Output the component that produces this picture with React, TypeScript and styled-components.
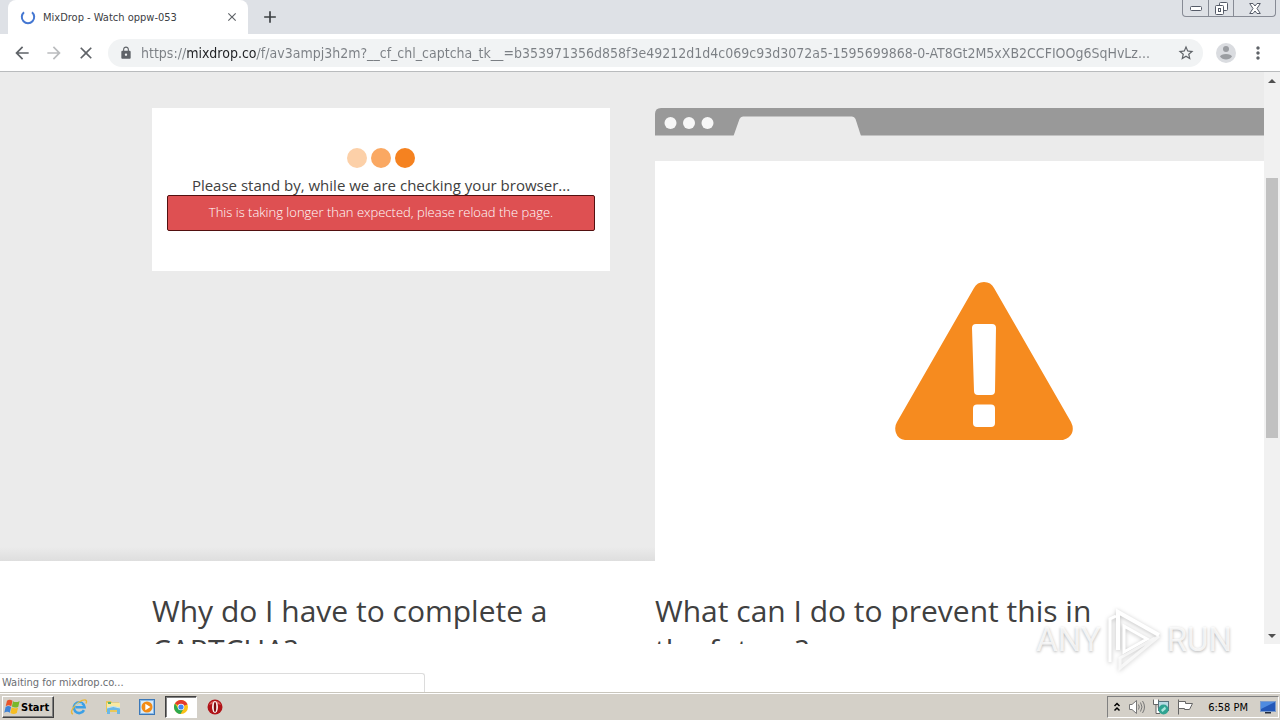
import React from "react";
import styled, { createGlobalStyle } from "styled-components";
import {
  MdArrowBack,
  MdArrowForward,
  MdClose,
  MdLock,
  MdStarBorder,
  MdMoreVert,
  MdAdd,
} from "react-icons/md";

const UI_FONT = '"DejaVu Sans Condensed", "DejaVu Sans", sans-serif';
const PAGE_FONT = '"Open Sans", sans-serif';

const GlobalStyle = createGlobalStyle`
  * { box-sizing: border-box; }
  body { margin: 0; background: #fff; font-family: ${UI_FONT}; }
  button { font: inherit; color: inherit; border: 0; padding: 0; background: none; }
  h2, p { margin: 0; }
`;

const Desktop = styled.div`
  display: flex;
  flex-direction: column;
  height: 100vh;
  overflow: hidden;
`;

/* Browser chrome */

const TabStrip = styled.header`
  display: flex;
  flex: none;
  height: 34px;
  padding-left: 8px;
  background: #dee1e6;
`;

const Tab = styled.div`
  display: flex;
  align-items: center;
  width: 240px;
  padding: 0 8px 0 12px;
  gap: 7px;
  background: #fff;
  border-radius: 8px 8px 0 0;
  color: #3c4043;
`;

const TabTitle = styled.span`
  flex: 1;
  font-size: 11px;
  white-space: nowrap;
`;

const IconButton = styled.button<{ $size?: number; $color?: string }>`
  display: grid;
  place-items: center;
  flex: none;
  width: ${(p) => p.$size ?? 32}px;
  height: ${(p) => p.$size ?? 32}px;
  color: ${(p) => p.$color ?? "#5f6368"};
`;

const NewTab = styled(IconButton)`
  align-self: center;
  margin-left: 6px;
`;

const WindowControls = styled.div`
  display: flex;
  height: 17px;
  margin: 0 4px 0 auto;
  border: 1px solid #878b95;
  border-top: 0;
  border-radius: 0 0 4px 4px;
`;

const WindowButton = styled.button<{ $wide?: boolean }>`
  display: grid;
  place-items: center;
  width: ${(p) => (p.$wide ? 42 : 25)}px;
  height: 16px;
  & + & { border-left: 1px solid #878b95; }
`;

const Toolbar = styled.div`
  display: flex;
  align-items: center;
  flex: none;
  height: 38px;
  padding: 0 6px;
  background: #fff;
  border-bottom: 1px solid #b9bbbd;
`;

const Omnibox = styled.div`
  display: flex;
  align-items: center;
  flex: 1;
  min-width: 0;
  height: 28px;
  margin: 0 7px 0 6px;
  padding: 0 1px 0 11px;
  gap: 8px;
  border-radius: 14px;
  background: #f1f3f4;
  color: #5f6368;
`;

const Address = styled.input`
  flex: 1;
  min-width: 0;
  height: 24px;
  border: 0;
  padding: 0;
  outline: 0;
  font-family: ${UI_FONT};
  font-size: 14px;
  color: transparent;
  background: linear-gradient(90deg, #7b7f84 46px, #202124 46px, #202124 116px, #7b7f84 116px);
  background-clip: text;
  -webkit-background-clip: text;
`;

/* Page */

const Viewport = styled.div`
  display: flex;
  flex: 1;
  min-height: 0;
  overflow: hidden;
`;

const Page = styled.main`
  flex: 1;
  min-width: 0;
  overflow: hidden;
  font-family: ${PAGE_FONT};
  color: #404040;
`;

const Columns = styled.section`
  display: grid;
  grid-template-columns: 458px minmax(0, 1fr);
  column-gap: 45px;
  padding-left: calc((100% - 960px) / 2);
`;

const Hero = styled(Columns)`
  padding-top: 36px;
  background: linear-gradient(#ebebeb, #ebebeb calc(100% - 14px), #dedede);
`;

const CheckCard = styled.div`
  align-self: start;
  padding: 40px 15px;
  background: #fff;
  text-align: center;
`;

const Dots = styled.div`
  display: flex;
  justify-content: center;
  gap: 4px;
`;

const Dot = styled.span<{ $color: string }>`
  width: 20px;
  height: 20px;
  border-radius: 50%;
  background: ${(p) => p.$color};
`;

const StandBy = styled.p`
  padding-top: 7px;
  font-size: 15px;
  line-height: 20px;
`;

const ErrorBox = styled.p`
  padding-bottom: 2px;
  border: 1px solid #521010;
  border-radius: 2px;
  background: #de5052;
  color: #fff;
  font-size: 13px;
  font-weight: 300;
  line-height: 32px;
`;

const MockClip = styled.div`
  overflow: hidden;
`;

const MockWindow = styled.div`
  width: 658px;
`;

const MockBar = styled.svg`
  display: block;
`;

const MockBody = styled.div`
  display: grid;
  place-items: center;
  height: 400px;
  margin-top: 25px;
  background: #fff;
`;

const Questions = styled(Columns)`
  padding-top: 30px;
  background: #fff;
`;

const Question = styled.h2`
  max-width: 458px;
  font-size: 30px;
  font-weight: 400;
  line-height: 39px;
`;

const Scrollbar = styled.div`
  display: flex;
  flex-direction: column;
  align-items: center;
  flex: none;
  width: 16px;
  background: #f1f1f1;
`;

const ScrollTrack = styled.div`
  flex: 1;
  padding-top: 89px;
`;

const ScrollThumb = styled.div`
  width: 12px;
  height: 260px;
  background: #c1c1c1;
`;

/* Bottom of the screen */

const StatusArea = styled.div`
  display: flex;
  align-items: flex-end;
  flex: none;
  height: 48px;
`;

const Status = styled.div`
  width: 425px;
  height: 19px;
  padding-left: 2px;
  border: 1px solid #dcdcdc;
  border-width: 1px 1px 0 0;
  border-radius: 0 3px 0 0;
  color: #6b6e72;
  font-size: 11px;
  line-height: 18px;
`;

const Taskbar = styled.footer`
  display: flex;
  align-items: center;
  flex: none;
  height: 28px;
  padding: 1px 1px 0 2px;
  border-top: 1px solid #c9c6bd;
  background: #d4d0c8;
  box-shadow: inset 0 1px #fff;
  color: #000;
  font-size: 11px;
`;

const StartButton = styled.button`
  display: flex;
  align-items: center;
  gap: 1px;
  width: 52px;
  height: 22px;
  padding-left: 1px;
  border: 1px solid;
  border-color: #fff #404040 #404040 #fff;
  box-shadow: inset -1px -1px #808080;
  font-weight: 700;
`;

const QuickLaunch = styled.nav`
  display: flex;
  margin-left: 9px;
  gap: 2px;
`;

const QuickButton = styled.button<{ $active?: boolean }>`
  display: grid;
  place-items: center;
  width: 32px;
  height: 22px;
  border: 1px solid transparent;
  ${(p) =>
    p.$active &&
    `background: #fff; border-color: #404040 #fff #fff #404040; box-shadow: inset 1px 1px #808080;`}
`;

const Tray = styled.div`
  display: flex;
  align-items: center;
  height: 22px;
  margin-left: auto;
  padding: 0 2px 0 5px;
  gap: 7px;
  border: 1px solid;
  border-color: #808080 #fff #fff #808080;
`;

const Clock = styled.time`
  padding: 0 5px 0 7px;
  white-space: nowrap;
`;

const Watermark = styled.div`
  position: absolute;
  right: 48px;
  bottom: 48px;
  display: flex;
  align-items: center;
  gap: 4px;
  color: rgba(255, 255, 255, 0.8);
  font-family: Roboto, sans-serif;
  font-size: 33px;
  line-height: 36px;
  text-shadow: 0 1px 3px rgba(0, 0, 0, 0.3);
  pointer-events: none;
`;

const MarkLogo = styled.svg`
  filter: drop-shadow(0 1px 2px rgba(0, 0, 0, 0.25));
`;

const Spinner = () => (
  <svg width="16" height="16" viewBox="0 0 16 16" fill="none" aria-hidden="true">
    <path d="M4 3.2A6.2 6.2 0 1 0 12 3.2" stroke="#4477d2" strokeWidth="2" />
  </svg>
);

const WarningSign = () => (
  <svg width="178" height="158" viewBox="0 0 178 158" role="img" aria-label="Warning">
    <path
      d="M79 6Q82 0 89 0T99 6L176 140Q179 146 177 151T168 158H10Q3 157 1 151T2 140Z"
      fill="#f68b1f"
    />
    <path
      d="M81 42H97Q101 42 101 46L100 109Q100 113 96 113H83Q79 113 79 109L77 46Q77 42 81 42Z"
      fill="#fff"
    />
    <rect x="78" y="122.500" width="22" height="22.500" rx="4" fill="#fff" />
  </svg>
);

const StartFlag = () => (
  <svg width="16" height="18" viewBox="0 0 16 16" preserveAspectRatio="none" aria-hidden="true">
    <path d="M3 2.500Q5.500 .5 8.500 2.500L7.300 7.400Q4.500 5.500 1.700 7.300Z" fill="#e8542a" />
    <path d="M9 2.800Q12 4.600 15.600 2.600L14.300 7.700Q11 9.300 7.900 7.600Z" fill="#79b82c" />
    <path d="M1.600 7.900Q4.500 6.200 7.100 8L5.800 13Q3.300 11.300 .3 13Z" fill="#3f83d6" />
    <path d="M7.700 8.300Q10.500 10 14.100 8.400L12.800 13.400Q9.500 15 6.400 13.300Z" fill="#f6bd22" />
  </svg>
);

const ExplorerE = () => (
  <svg width="18" height="18" viewBox="0 0 18 18" fill="none" aria-hidden="true">
    <path d="M14 12.200A5.400 5.400 0 1 1 14.600 9.300H5.500" stroke="#3ba0e6" strokeWidth="2.600" />
    <path d="M3 16C-1 15 4 7 9 4S18 1 16 5.500" stroke="#e9b83a" strokeWidth="1.400" />
    <path d="M5 7.500Q8 3.800 12 6" stroke="#9ad8fa" strokeWidth="1" />
  </svg>
);

const FolderIcon = () => (
  <svg width="18" height="18" viewBox="0 0 18 18" aria-hidden="true">
    <path d="M2 3H7L8 4.500H15V14H2Z" fill="#e9c858" />
    <path d="M3 5H16V12H3Z" fill="#f9e9a2" />
    <path d="M4 4H7V6H4Z" fill="#57b26b" />
    <path d="M3 10Q9 7 16 10V16H13V12H6V16H3Z" fill="#6bb8e6" />
    <path d="M3 10Q9 7 16 10" stroke="#c6e8f8" fill="none" />
  </svg>
);

const PlayerIcon = () => (
  <svg width="16" height="16" viewBox="0 0 16 16" aria-hidden="true">
    <rect x=".5" y=".5" width="15" height="15" fill="#8bbbe8" stroke="#3b78b8" />
    <rect x="2" y="2" width="12" height="12" fill="#d8ebfa" />
    <circle cx="8" cy="8" r="5.500" fill="#f28b16" />
    <path d="M6.300 4.800L11.500 8L6.300 11.200Z" fill="#fff" />
  </svg>
);

const ChromeIcon = () => (
  <svg width="14" height="14" viewBox="0 0 14 14" aria-hidden="true">
    <circle cx="7" cy="7" r="7" fill="#fbc116" />
    <path d="M7 7L.94 3.500A7 7 0 0 1 13.060 3.500Z" fill="#e33b2e" />
    <path d="M.94 3.500A7 7 0 0 0 6.500 14L9.700 8.600L7 7L4.200 8.600Z" fill="#2da94f" />
    <path d="M7 3.500H13.060L13.400 4.500L9 6Z" fill="#e33b2e" />
    <circle cx="7" cy="7" r="3.300" fill="#fff" />
    <circle cx="7" cy="7" r="2.600" fill="#4285f4" />
  </svg>
);

const OperaIcon = () => (
  <svg width="16" height="16" viewBox="0 0 16 16" aria-hidden="true">
    <circle cx="8" cy="8" r="7.500" fill="#b01318" />
    <path d="M2 6A6.500 6.500 0 0 1 14 6Q8 3 2 6Z" fill="#dc5a58" />
    <ellipse cx="8" cy="8" rx="3" ry="6" fill="#f8eeec" />
    <ellipse cx="8" cy="8" rx="1.200" ry="5" fill="#7d0b0f" />
  </svg>
);

const Avatar = () => (
  <svg width="20" height="20" viewBox="0 0 20 20" aria-hidden="true">
    <circle cx="10" cy="10" r="10" fill="#dadce0" />
    <circle cx="10" cy="6" r="3" fill="#9a9da1" />
    <path d="M4 13.500Q5 11 10 11T16 13.500Q14 16.500 10 16.500T4 13.500Z" fill="#9a9da1" />
  </svg>
);

const Arrow = ({ down }: { down?: boolean }) => (
  <svg width="8" height="4" viewBox="0 0 8 4" aria-hidden="true">
    <path d={down ? "M0 0H8L4 4Z" : "M0 4H8L4 0Z"} fill="#505050" />
  </svg>
);

export default function App() {
  return (
    <Desktop>
      <GlobalStyle />
      <TabStrip>
        <Tab>
          <Spinner />
          <TabTitle>MixDrop - Watch oppw-053</TabTitle>
          <IconButton $size={16} aria-label="Close tab">
            <MdClose size={14} />
          </IconButton>
        </Tab>
        <NewTab aria-label="New tab" $color="#3c4043">
          <MdAdd size={20} />
        </NewTab>
        <WindowControls>
          <WindowButton aria-label="Minimize">
            <svg width="12" height="5" viewBox="0 0 12 5">
              <rect x=".5" y=".5" width="11" height="4" rx="1" fill="#fff" stroke="#555b68" />
            </svg>
          </WindowButton>
          <WindowButton aria-label="Restore">
            <svg width="13" height="13" viewBox="0 0 13 13" fill="#fff" stroke="#555b68">
              <rect x="4.500" y=".5" width="8" height="8" rx="1" />
              <rect x=".5" y="3.500" width="8" height="9" rx="1" />
              <rect x="3.500" y="6.500" width="2" height="3" />
            </svg>
          </WindowButton>
          <WindowButton aria-label="Close" $wide>
            <svg width="12" height="11" viewBox="0 0 12 11" fill="#fff" stroke="#555b68">
              <path d="M.7.5H4L6 3L8 .5H11.300L8 5.500L11.300 10.500H8L6 8L4 10.500H.7L4 5.500Z" />
            </svg>
          </WindowButton>
        </WindowControls>
      </TabStrip>

      <Toolbar>
        <IconButton aria-label="Back">
          <MdArrowBack size={20} />
        </IconButton>
        <IconButton aria-label="Forward" $color="#babcbe">
          <MdArrowForward size={20} />
        </IconButton>
        <IconButton aria-label="Stop loading">
          <MdClose size={20} />
        </IconButton>
        <Omnibox>
          <MdLock size={14} />
          <Address
            aria-label="Address"
            readOnly
            value="https://mixdrop.co/f/av3ampj3h2m?__cf_chl_captcha_tk__=b353971356d858f3e49212d1d4c069c93d3072a5-1595699868-0-AT8Gt2M5xXB2CCFIOOg6SqHvLz..."
          />
          <IconButton aria-label="Bookmark this page">
            <MdStarBorder size={18} />
          </IconButton>
        </Omnibox>
        <IconButton aria-label="Profile">
          <Avatar />
        </IconButton>
        <IconButton aria-label="Menu">
          <MdMoreVert size={20} />
        </IconButton>
      </Toolbar>

      <Viewport>
        <Page>
          <Hero>
            <CheckCard>
              <Dots>
                <Dot $color="#fcd0a8" />
                <Dot $color="#faa862" />
                <Dot $color="#f58220" />
              </Dots>
              <StandBy>Please stand by, while we are checking your browser...</StandBy>
              <ErrorBox role="alert">
                This is taking longer than expected, please reload the page.
              </ErrorBox>
            </CheckCard>
            <MockClip>
              <MockWindow>
                <MockBar width="658" height="28" viewBox="0 0 658 28" aria-hidden="true">
                  <path d="M0 27.500V6Q0 0 6 0H652Q658 0 658 6V27.500Z" fill="#999" />
                  <path d="M78.500 28L84.500 11Q85.500 8.500 88 8.500H197Q199.500 8.500 200.500 11L206 28Z" fill="#ebebeb" />
                  <circle cx="15.500" cy="15" r="6" fill="#f7f7f7" />
                  <circle cx="34" cy="15" r="6" fill="#f7f7f7" />
                  <circle cx="52.500" cy="15" r="6" fill="#f7f7f7" />
                </MockBar>
                <MockBody>
                  <WarningSign />
                </MockBody>
              </MockWindow>
            </MockClip>
          </Hero>
          <Questions>
            <Question>Why do I have to complete a CAPTCHA?</Question>
            <Question>What can I do to prevent this in the future?</Question>
          </Questions>
        </Page>
        <Scrollbar>
          <IconButton $size={17} aria-label="Scroll up">
            <Arrow />
          </IconButton>
          <ScrollTrack>
            <ScrollThumb />
          </ScrollTrack>
          <IconButton $size={17} aria-label="Scroll down">
            <Arrow down />
          </IconButton>
        </Scrollbar>
      </Viewport>

      <StatusArea>
        <Status role="status">Waiting for mixdrop.co...</Status>
      </StatusArea>

      <Taskbar>
        <StartButton>
          <StartFlag />
          Start
        </StartButton>
        <QuickLaunch>
          <QuickButton aria-label="Internet Explorer">
            <ExplorerE />
          </QuickButton>
          <QuickButton aria-label="File Explorer">
            <FolderIcon />
          </QuickButton>
          <QuickButton aria-label="Media Player">
            <PlayerIcon />
          </QuickButton>
          <QuickButton aria-label="Chrome" $active>
            <ChromeIcon />
          </QuickButton>
          <QuickButton aria-label="Opera">
            <OperaIcon />
          </QuickButton>
        </QuickLaunch>
        <Tray>
          <svg width="8" height="10" viewBox="0 0 8 10" fill="none" stroke="#000" strokeWidth="1.500" aria-hidden="true">
            <path d="M1.500 4L4 1.500L6.500 4M1.500 8.500L4 6L6.500 8.500" />
          </svg>
          <svg width="18" height="16" viewBox="0 0 18 16" fill="none" stroke="#777" aria-hidden="true">
            <path d="M1.500 5.500H4L8.500 1.500V14.500L4 10.500H1.500Z" fill="#fff" />
            <path d="M10.500 5.500Q12 8 10.500 10.500M12.500 3.500Q15.500 8 12.500 12.500M14.500 2Q18.500 8 14.500 14" />
          </svg>
          <svg width="16" height="16" viewBox="0 0 16 16" aria-hidden="true">
            <path d="M.5 .5V5.500H5.500V.5M3 5.500V14.500H7" fill="#fff" stroke="#666" />
            <rect x="5.500" y="2.500" width="10" height="9" fill="#b9dbe4" stroke="#59727c" />
            <circle cx="10.500" cy="10.500" r="5" fill="#2fa391" />
            <path d="M8 11L12 7.500L13 10L9.500 13Z" fill="#a7e5dc" />
          </svg>
          <svg width="18" height="16" viewBox="0 0 18 16" fill="#fff" stroke="#666" aria-hidden="true">
            <path d="M2.500 .5V15.500" />
            <path d="M2.500 2.500H9.500V4.500H16.500L13.500 10.500H8.500V9.500H2.500Z" />
          </svg>
          <Clock>6:58 PM</Clock>
          <svg width="16" height="14" viewBox="0 0 16 14" aria-hidden="true">
            <rect x=".5" y="1.500" width="15" height="10" fill="#2458b8" stroke="#7d9ccb" />
            <path d="M1 2H15L1 9Z" fill="#4f8be0" />
            <path d="M5 12H11V13.500H5Z" fill="#222b3d" />
          </svg>
        </Tray>
      </Taskbar>

      <Watermark>
        ANY
        <MarkLogo width="58" height="64" viewBox="0 0 58 64" fill="none" aria-hidden="true">
          <path d="M5 54V11L11 8" stroke="#fff" strokeWidth="3" />
          <path d="M13 42V4L54 27" stroke="#fff" strokeWidth="4" />
          <path d="M54 28L15 60V50L50 30" stroke="#fff" strokeOpacity=".7" strokeWidth="3" />
          <path d="M19 18V44L42 31Z" stroke="#fff" strokeWidth="3" />
        </MarkLogo>
        RUN
      </Watermark>
    </Desktop>
  );
}
